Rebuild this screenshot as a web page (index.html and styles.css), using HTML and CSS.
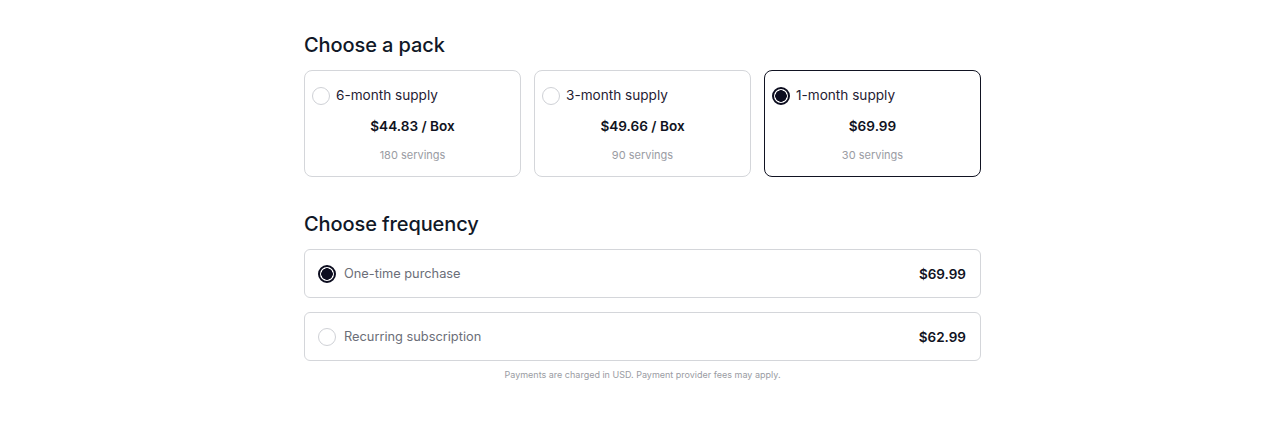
FILE: index.html
```html
<!DOCTYPE html>
<html lang="en">
<head>
<meta charset="utf-8">
<title>Choose a pack</title>
<link rel="stylesheet" href="styles.css">
</head>
<body>
<main class="page">
  <section class="panel">
    <h2 class="title">Choose a pack</h2>
    <div class="packs">
      <label class="pack">
        <span class="pack-head"><span class="radio"></span><span class="pack-name">6-month supply</span></span>
        <span class="pack-price">$44.83 / Box</span>
        <span class="pack-serv">180 servings</span>
      </label>
      <label class="pack">
        <span class="pack-head"><span class="radio"></span><span class="pack-name">3-month supply</span></span>
        <span class="pack-price">$49.66 / Box</span>
        <span class="pack-serv">90 servings</span>
      </label>
      <label class="pack is-selected">
        <span class="pack-head"><span class="radio is-checked"></span><span class="pack-name">1-month supply</span></span>
        <span class="pack-price">$69.99</span>
        <span class="pack-serv">30 servings</span>
      </label>
    </div>

    <h2 class="title title-freq">Choose frequency</h2>
    <div class="freqs">
      <label class="freq">
        <span class="freq-left"><span class="radio is-checked"></span><span class="freq-name">One-time purchase</span></span>
        <span class="freq-price">$69.99</span>
      </label>
      <label class="freq">
        <span class="freq-left"><span class="radio"></span><span class="freq-name">Recurring subscription</span></span>
        <span class="freq-price">$62.99</span>
      </label>
    </div>
    <p class="note">Payments are charged in USD. Payment provider fees may apply.</p>
  </section>
</main>
</body>
</html>
```

FILE: styles.css
```css
* { box-sizing: border-box; }
html, body { margin: 0; padding: 0; background: #ffffff; }
body {
  font-family: Inter, "Noto Sans", "Liberation Sans", sans-serif;
  color: #111827;
}
.page {
  display: flex;
  justify-content: center;
  padding: 31px 0 0 5px;
}
.panel {
  width: 677px;
  display: flex;
  flex-direction: column;
}
.title {
  margin: 0 0 11px;
  font-size: 20px;
  line-height: 28px;
  font-weight: 500;
  color: #111827;
  letter-spacing: -0.1px;
}
.title-freq { margin-top: 33px; }
.packs {
  display: grid;
  grid-template-columns: repeat(3, 1fr);
  gap: 13px;
}
.pack {
  display: flex;
  flex-direction: column;
  align-items: center;
  height: 107px;
  padding: 15px 7px 0;
  border: 1px solid #d4d6da;
  border-radius: 8px;
  background: #fff;
}
.pack.is-selected { border-color: #111322; }
.pack-head {
  align-self: stretch;
  display: flex;
  align-items: center;
  gap: 6px;
  height: 19px;
}
.pack-name {
  font-size: 13.6px;
  line-height: 19px;
  color: #1f2133;
}
.pack-price {
  margin-top: 11px;
  font-size: 13.6px;
  line-height: 20px;
  font-weight: 600;
  color: #111322;
}
.pack-serv {
  margin-top: 11px;
  font-size: 11px;
  line-height: 16px;
  color: #9a9ca3;
}
.radio {
  flex: none;
  width: 18px;
  height: 18px;
  border-radius: 50%;
  border: 1px solid #cfd1d6;
  background: #fff;
}
.radio.is-checked {
  border: 2px solid #0c0d1f;
  background: radial-gradient(circle, #0c0d1f 0 5.5px, #fff 6px);
}
.freqs {
  display: flex;
  flex-direction: column;
  gap: 14px;
}
.freq {
  display: flex;
  align-items: center;
  justify-content: space-between;
  height: 49px;
  padding: 0 14px 0 13px;
  border: 1px solid #d4d6da;
  border-radius: 6px;
}
.freq-left {
  display: flex;
  align-items: center;
  gap: 8px;
}
.freq-name {
  font-size: 12.8px;
  color: #6b6e78;
}
.freq-price {
  font-size: 13.5px;
  font-weight: 600;
  color: #111322;
}
.note {
  margin: 8px 0 0;
  text-align: center;
  font-size: 9px;
  line-height: 12px;
  color: #9a9ca3;
}
```
